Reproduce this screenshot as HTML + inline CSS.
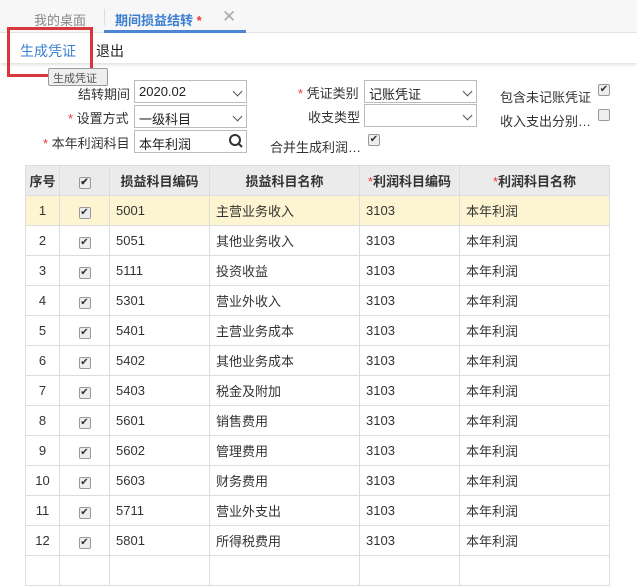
<!DOCTYPE html>
<html><head><meta charset="utf-8"><style>
*{margin:0;padding:0;box-sizing:border-box}
body{width:637px;height:562px;overflow:hidden;background:#fff;font-family:"Liberation Sans","Noto Sans CJK SC",sans-serif;font-size:13px;color:#333;position:relative}
.abs{position:absolute;white-space:nowrap}
.tabs{position:absolute;left:0;top:0;width:637px;height:33px;background:#f7f7f7;border-bottom:1px solid #e4e4e4}
.tool{position:absolute;left:0;top:33px;width:637px;height:30px;background:#fff;box-shadow:0 2px 3px rgba(0,0,0,.12)}
.sel{position:absolute;height:23px;border:1px solid #bbb;background:#fff;font-size:13px;padding:3px 0 0 4px;color:#222}
.sel .ar{position:absolute;right:5px;top:7px;width:7px;height:7px;border-right:1.5px solid #555;border-bottom:1.5px solid #555;transform:rotate(45deg)}
.cb{position:absolute;width:12px;height:12px;border:1px solid #999;border-radius:2px;background:#eee;font-size:10px;line-height:10px;text-align:center;color:#333}
.star{color:#e33}
table{position:absolute;left:25px;top:165px;border-collapse:collapse;font-size:13px}
td,th{border:1px solid #ddd;height:30px;padding:0 6px}
th{background:#ebebeb;font-weight:bold;text-align:center}
td.c{text-align:center}
tr.hl td{background:#fdf5d2}
</style></head><body>
<div class="tabs"></div>
<div class="abs" style="left:34px;top:10px;color:#888">我的桌面</div>
<div class="abs" style="left:104px;top:9px;width:1px;height:16px;background:#ddd"></div>
<div class="abs" style="left:115px;top:10px;color:#3a7fd0;font-weight:bold">期间损益结转 <span class="star">*</span></div>
<div class="abs" style="left:222px;top:7px;color:#aaa;font-size:17px">✕</div>
<div class="abs" style="left:104px;top:30px;width:142px;height:3px;background:#4a86d4"></div>
<div class="tool"></div>
<div class="abs" style="left:20px;top:41px;color:#3a7fd0;font-size:14px">生成凭证</div>
<div class="abs" style="left:96px;top:41px;color:#222;font-size:14px">退出</div>
<div class="abs" style="left:7px;top:27px;width:86px;height:50px;border:3px solid #d9363e"></div>
<div class="abs" style="left:48px;top:68px;width:60px;height:18px;border:1px solid #999;border-radius:2px;background:#eee;font-size:11px;color:#555;padding:1px 4px">生成凭证</div>
<div class="abs" style="left:78px;top:84px">结转期间</div>
<div class="sel" style="left:134px;top:80px;width:113px">2020.02<span class="ar"></span></div>
<div class="abs" style="left:68px;top:108px"><span class="star">*</span> 设置方式</div>
<div class="sel" style="left:134px;top:105px;width:113px">一级科目<span class="ar"></span></div>
<div class="abs" style="left:43px;top:133px"><span class="star">*</span> 本年利润科目</div>
<div class="sel" style="left:134px;top:130px;width:113px">本年利润
<svg style="position:absolute;right:2px;top:2px" width="16" height="16"><circle cx="7" cy="7" r="5" stroke="#333" stroke-width="2" fill="none"/><line x1="11" y1="11" x2="14" y2="14" stroke="#333" stroke-width="2"/></svg></div>
<div class="abs" style="left:298px;top:83px"><span class="star">*</span> 凭证类别</div>
<div class="sel" style="left:364px;top:80px;width:113px">记账凭证<span class="ar"></span></div>
<div class="abs" style="left:308px;top:107px">收支类型</div>
<div class="sel" style="left:364px;top:104px;width:113px"><span class="ar"></span></div>
<div class="abs" style="left:270px;top:137px">合并生成利润…</div>
<div class="cb" style="left:368px;top:134px">✔</div>
<div class="abs" style="left:500px;top:87px">包含未记账凭证</div>
<div class="cb" style="left:598px;top:84px">✔</div>
<div class="abs" style="left:500px;top:111px">收入支出分别…</div>
<div class="cb" style="left:598px;top:109px"></div>
<table>
<tr><th style="width:34px;padding:0">序号</th><th style="width:50px"><span class="cb" style="position:relative;display:inline-block">✔</span></th><th style="width:100px">损益科目编码</th><th style="width:150px">损益科目名称</th><th style="width:100px;padding:0"><span class="star" style="font-weight:normal">*</span>利润科目编码</th><th style="width:150px"><span class="star" style="font-weight:normal">*</span>利润科目名称</th></tr>
<tr class="hl"><td class="c">1</td><td class="c"><span class="cb" style="position:relative;display:inline-block">✔</span></td><td>5001</td><td>主营业务收入</td><td>3103</td><td>本年利润</td></tr>
<tr><td class="c">2</td><td class="c"><span class="cb" style="position:relative;display:inline-block">✔</span></td><td>5051</td><td>其他业务收入</td><td>3103</td><td>本年利润</td></tr>
<tr><td class="c">3</td><td class="c"><span class="cb" style="position:relative;display:inline-block">✔</span></td><td>5111</td><td>投资收益</td><td>3103</td><td>本年利润</td></tr>
<tr><td class="c">4</td><td class="c"><span class="cb" style="position:relative;display:inline-block">✔</span></td><td>5301</td><td>营业外收入</td><td>3103</td><td>本年利润</td></tr>
<tr><td class="c">5</td><td class="c"><span class="cb" style="position:relative;display:inline-block">✔</span></td><td>5401</td><td>主营业务成本</td><td>3103</td><td>本年利润</td></tr>
<tr><td class="c">6</td><td class="c"><span class="cb" style="position:relative;display:inline-block">✔</span></td><td>5402</td><td>其他业务成本</td><td>3103</td><td>本年利润</td></tr>
<tr><td class="c">7</td><td class="c"><span class="cb" style="position:relative;display:inline-block">✔</span></td><td>5403</td><td>税金及附加</td><td>3103</td><td>本年利润</td></tr>
<tr><td class="c">8</td><td class="c"><span class="cb" style="position:relative;display:inline-block">✔</span></td><td>5601</td><td>销售费用</td><td>3103</td><td>本年利润</td></tr>
<tr><td class="c">9</td><td class="c"><span class="cb" style="position:relative;display:inline-block">✔</span></td><td>5602</td><td>管理费用</td><td>3103</td><td>本年利润</td></tr>
<tr><td class="c">10</td><td class="c"><span class="cb" style="position:relative;display:inline-block">✔</span></td><td>5603</td><td>财务费用</td><td>3103</td><td>本年利润</td></tr>
<tr><td class="c">11</td><td class="c"><span class="cb" style="position:relative;display:inline-block">✔</span></td><td>5711</td><td>营业外支出</td><td>3103</td><td>本年利润</td></tr>
<tr><td class="c">12</td><td class="c"><span class="cb" style="position:relative;display:inline-block">✔</span></td><td>5801</td><td>所得税费用</td><td>3103</td><td>本年利润</td></tr>
<tr><td class="c"></td><td></td><td></td><td></td><td></td><td></td></tr>
</table>
</body></html>
